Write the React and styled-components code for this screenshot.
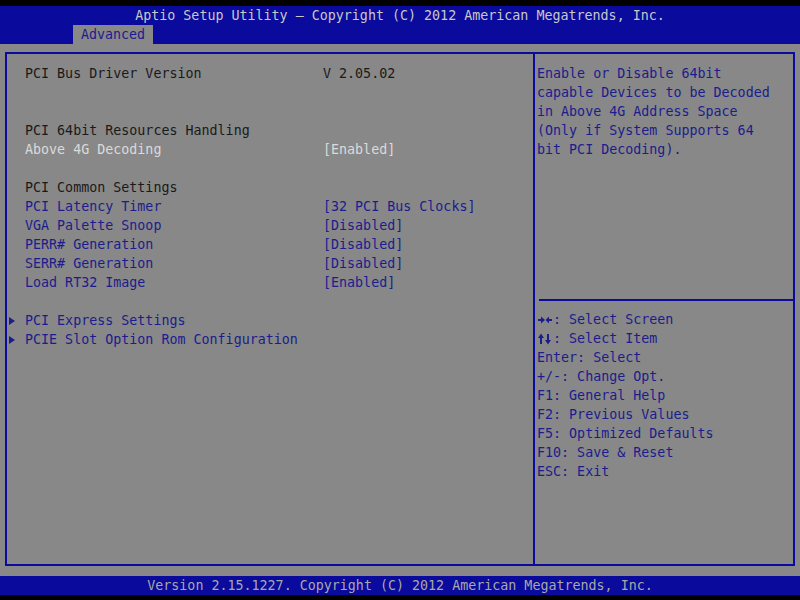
import React from "react";
import styled, { createGlobalStyle } from "styled-components";

const BLUE = "#0a0a9c";
const GRAY = "#888888";
const INK = "#1c1c8c";

const GlobalStyle = createGlobalStyle`
  html, body {
    margin: 0;
    padding: 0;
    background: #000;
  }
  body {
    font-family: "DejaVu Sans Mono", "Liberation Mono", monospace;
    font-size: 13.33px;
  }
`;

const Screen = styled.div`
  width: 800px;
  height: 600px;
  background: #000;
  display: flex;
  flex-direction: column;
  padding-top: 6px;
  box-sizing: border-box;
`;

const Header = styled.header`
  background: ${BLUE};
  height: 38px;
  display: flex;
  flex-direction: column;
`;

const Title = styled.div`
  height: 19px;
  line-height: 19px;
  text-align: center;
  color: #c8c8c8;
  white-space: pre;
`;

const TabRow = styled.div`
  display: flex;
  height: 19px;
  padding-left: 73px;
`;

const Tab = styled.div`
  width: 80px;
  background: ${GRAY};
  color: ${INK};
  line-height: 19px;
  text-align: center;
`;

const Main = styled.main`
  background: ${GRAY};
  height: 532px;
  padding: 8px 5px 10px;
  box-sizing: border-box;
`;

const Frame = styled.div`
  height: 100%;
  border: 2px solid ${BLUE};
  box-sizing: border-box;
  display: grid;
  grid-template-columns: 528px 1fr;
`;

const LeftPanel = styled.div`
  border-right: 2px solid ${BLUE};
  padding-top: 10px;
`;

const Row = styled.div`
  display: grid;
  grid-template-columns: 18px 298px auto;
  height: 19px;
  line-height: 19px;
  white-space: pre;
  color: ${p =>
    p.$kind === "selected" ? "#dadada" : p.$kind === "item" ? INK : "#1a1a1a"};
`;

const Marker = styled.span`
  display: flex;
  align-items: center;
  padding-left: 2px;
`;

const Triangle = styled.span`
  width: 0;
  height: 0;
  border-top: 4px solid transparent;
  border-bottom: 4px solid transparent;
  border-left: 6px solid ${INK};
`;

const RightPanel = styled.div`
  display: flex;
  flex-direction: column;
  padding: 10px 0 0 2px;
`;

const Help = styled.div`
  height: 235px;
  color: ${INK};
  line-height: 19px;
  white-space: pre;
`;

const Rule = styled.div`
  height: 2px;
  background: ${BLUE};
  margin-left: 2px;
`;

const Keys = styled.div`
  padding-top: 9px;
  color: ${INK};
  line-height: 19px;
  white-space: pre;
`;

const KeyLine = styled.div`
  display: flex;
  align-items: center;
  height: 19px;
`;

const Footer = styled.footer`
  background: ${BLUE};
  height: 19px;
  line-height: 19px;
  text-align: center;
  color: #a8a8a8;
  white-space: pre;
`;

// the two-arrow key glyphs of the AMI font
const LeftRight = () => (
  <svg width="16" height="19" viewBox="0 0 16 19">
    <g fill={INK} stroke={INK}>
      <line x1="1" y1="10" x2="5" y2="10" strokeWidth="2" />
      <polygon points="4,6.5 8,10 4,13.5" stroke="none" />
      <polygon points="12,6.5 8.5,10 12,13.5" stroke="none" />
      <line x1="11" y1="10" x2="15" y2="10" strokeWidth="2" />
    </g>
  </svg>
);

const UpDown = () => (
  <svg width="16" height="19" viewBox="0 0 16 19">
    <g fill={INK} stroke={INK}>
      <polygon points="1,9 4,4.5 7,9" stroke="none" />
      <line x1="4" y1="8" x2="4" y2="15" strokeWidth="2" />
      <line x1="11" y1="5" x2="11" y2="12" strokeWidth="2" />
      <polygon points="8,11 11,15.5 14,11" stroke="none" />
    </g>
  </svg>
);

const rows = [
  { label: "PCI Bus Driver Version", value: "V 2.05.02" },
  {},
  {},
  { label: "PCI 64bit Resources Handling" },
  { label: "Above 4G Decoding", value: "[Enabled]", kind: "selected" },
  {},
  { label: "PCI Common Settings" },
  { label: "PCI Latency Timer", value: "[32 PCI Bus Clocks]", kind: "item" },
  { label: "VGA Palette Snoop", value: "[Disabled]", kind: "item" },
  { label: "PERR# Generation", value: "[Disabled]", kind: "item" },
  { label: "SERR# Generation", value: "[Disabled]", kind: "item" },
  { label: "Load RT32 Image", value: "[Enabled]", kind: "item" },
  {},
  { label: "PCI Express Settings", kind: "item", sub: true },
  { label: "PCIE Slot Option Rom Configuration", kind: "item", sub: true },
];

const help = [
  "Enable or Disable 64bit",
  "capable Devices to be Decoded",
  "in Above 4G Address Space",
  "(Only if System Supports 64",
  "bit PCI Decoding).",
];

const keys = [
  [LeftRight, ": Select Screen"],
  [UpDown, ": Select Item"],
  [null, "Enter: Select"],
  [null, "+/-: Change Opt."],
  [null, "F1: General Help"],
  [null, "F2: Previous Values"],
  [null, "F5: Optimized Defaults"],
  [null, "F10: Save & Reset"],
  [null, "ESC: Exit"],
];

export default function App() {
  return (
    <Screen>
      <GlobalStyle />
      <Header>
        <Title>Aptio Setup Utility – Copyright (C) 2012 American Megatrends, Inc.</Title>
        <TabRow>
          <Tab>Advanced</Tab>
        </TabRow>
      </Header>
      <Main>
        <Frame>
          <LeftPanel>
            {rows.map((r, i) => (
              <Row key={i} $kind={r.kind}>
                <Marker>{r.sub && <Triangle />}</Marker>
                <span>{r.label || ""}</span>
                <span>{r.value || ""}</span>
              </Row>
            ))}
          </LeftPanel>
          <RightPanel>
            <Help>
              {help.map(line => (
                <div key={line}>{line}</div>
              ))}
            </Help>
            <Rule />
            <Keys>
              {keys.map(([Glyph, text]) => (
                <KeyLine key={text}>
                  {Glyph && <Glyph />}
                  {text}
                </KeyLine>
              ))}
            </Keys>
          </RightPanel>
        </Frame>
      </Main>
      <Footer>Version 2.15.1227. Copyright (C) 2012 American Megatrends, Inc.</Footer>
    </Screen>
  );
}
